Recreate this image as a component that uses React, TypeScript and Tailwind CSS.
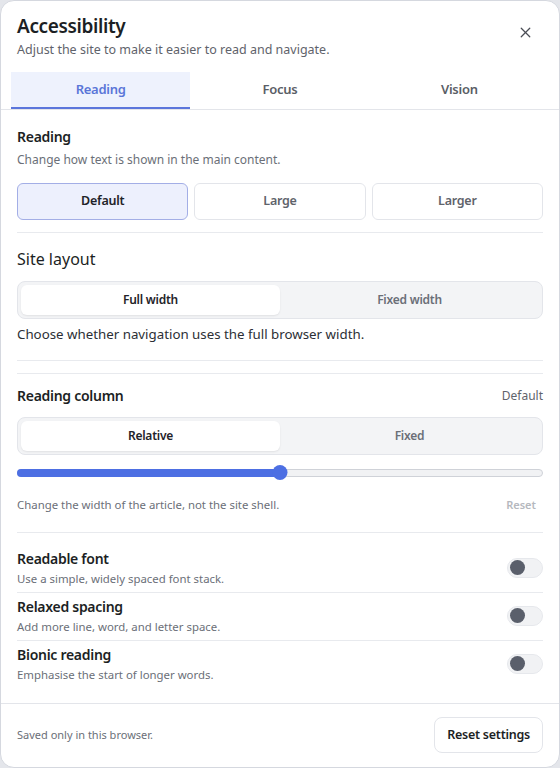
import React, { useState } from 'react'
import { X } from 'lucide-react'

const tabs = ['Reading', 'Focus', 'Vision']
const sizes = ['Default', 'Large', 'Larger']

const toggles = [
  { title: 'Readable font', text: 'Use a simple, widely spaced font stack.' },
  { title: 'Relaxed spacing', text: 'Add more line, word, and letter space.' },
  { title: 'Bionic reading', text: 'Emphasise the start of longer words.' },
]

const Segmented: React.FC<{ options: string[]; value: string; onChange: (v: string) => void }> = ({
  options,
  value,
  onChange,
}) => (
  <div className="flex h-[38px] rounded-lg border border-[#e3e5ea] bg-[#f3f4f6] p-[3px]">
    {options.map(o => (
      <button
        key={o}
        type="button"
        onClick={() => onChange(o)}
        className={`flex-1 rounded-md text-[12px] font-semibold tracking-[-0.02em] ${
          value === o ? 'bg-white text-[#1f2329] shadow-[0_1px_2px_rgba(0,0,0,0.08)]' : 'text-[#6b6f78]'
        }`}
      >
        {o}
      </button>
    ))}
  </div>
)

export default function App() {
  const [tab, setTab] = useState('Reading')
  const [size, setSize] = useState('Default')
  const [layout, setLayout] = useState('Full width')
  const [column, setColumn] = useState('Relative')
  const [width] = useState(50)
  const [on, setOn] = useState<boolean[]>([false, false, false])

  return (
    <div
      className="h-[768px] w-[560px] bg-[#e4e6eb]"
      style={{ fontFamily: '"Noto Sans", "Open Sans", sans-serif' }}
    >
      <div className="flex h-full flex-col overflow-hidden rounded-[14px] border border-[#d5d8df] bg-white">
        {/* header */}
        <div className="flex items-start justify-between px-4 pt-[13px]">
          <div>
            <h1 className="text-[19px] font-semibold leading-[24px] tracking-[-0.02em] text-[#1c1f24]">
              Accessibility
            </h1>
            <p className="mt-[3px] text-[12.5px] leading-[18px] text-[#5f636b]">
              Adjust the site to make it easier to read and navigate.
            </p>
          </div>
          <button type="button" className="mr-[9px] mt-[10px] text-[#4a4d55]" aria-label="Close">
            <X className="h-[17px] w-[17px]" strokeWidth={1.8} />
          </button>
        </div>

        {/* tabs */}
        <div className="mt-[13px] border-b border-[#e3e5ea] px-[10px]">
          <div className="flex">
            {tabs.map(t => (
              <button
                key={t}
                type="button"
                onClick={() => setTab(t)}
                className={`h-[37px] flex-1 border-b-2 text-[13px] font-semibold tracking-[-0.02em] ${
                  tab === t
                    ? 'border-[#5b76dc] bg-[#eef2fd] text-[#5a76d8]'
                    : 'border-transparent text-[#5a5e66]'
                }`}
              >
                {t}
              </button>
            ))}
          </div>
        </div>

        {/* content */}
        <div className="flex-1 px-4">
          <div className="border-b border-[#e8eaee] pb-[12px] pt-[17px]">
            <h2 className="text-[14px] font-semibold leading-[20px] tracking-[-0.02em] text-[#1c1f24]">Reading</h2>
            <p className="mt-[4px] text-[12px] leading-[17px] text-[#6b6f78]">
              Change how text is shown in the main content.
            </p>
            <div className="mt-[15px] grid grid-cols-3 gap-[6px]">
              {sizes.map(s => (
                <button
                  key={s}
                  type="button"
                  onClick={() => setSize(s)}
                  className={`h-[37px] rounded-md border text-[12.5px] font-semibold tracking-[-0.02em] ${
                    size === s
                      ? 'border-[#a3aee6] bg-[#edf0fd] text-[#1f2329]'
                      : 'border-[#e3e5ea] bg-white text-[#5f636b]'
                  }`}
                >
                  {s}
                </button>
              ))}
            </div>
          </div>

          <div className="border-b border-[#e8eaee] pb-[17px] pt-[15px]">
            <h2 className="text-[16px] leading-[22px] text-[#1c1f24]">Site layout</h2>
            <div className="mt-[11px]">
              <Segmented options={['Full width', 'Fixed width']} value={layout} onChange={setLayout} />
            </div>
            <p className="mt-[6px] text-[13.3px] leading-[18px] text-[#2c2f35]">
              Choose whether navigation uses the full browser width.
            </p>
          </div>

          <div className="mt-[12px] border-t border-b border-[#e8eaee] pb-[18px] pt-[12px]">
            <div className="flex items-center justify-between">
              <h2 className="text-[14px] font-semibold leading-[20px] tracking-[-0.02em] text-[#1c1f24]">
                Reading column
              </h2>
              <span className="text-[12px] text-[#5f636b]">Default</span>
            </div>
            <div className="mt-[11px]">
              <Segmented options={['Relative', 'Fixed']} value={column} onChange={setColumn} />
            </div>
            <div className="relative mt-[10px] h-[15px]">
              <div className="absolute left-0 right-0 top-[3.5px] h-[8px] rounded-full border border-[#cfd2d8] bg-[#f1f2f4]" />
              <div
                className="absolute left-0 top-[3.5px] h-[8px] rounded-full bg-[#4d6fe3]"
                style={{ width: `${width}%` }}
              />
              <div
                className="absolute top-0 h-[15px] w-[15px] -translate-x-1/2 rounded-full bg-[#4d6fe3]"
                style={{ left: `${width}%` }}
              />
            </div>
            <div className="mt-[17px] flex items-center justify-between">
              <p className="text-[11.4px] leading-[16px] text-[#6b6f78]">
                Change the width of the article, not the site shell.
              </p>
              <button type="button" className="mr-[7px] text-[11px] font-semibold text-[#b5b8be]">
                Reset
              </button>
            </div>
          </div>

          <div className="pt-[12px]">
            {toggles.map((t, i) => (
              <div
                key={t.title}
                className={`flex items-center justify-between pb-[5px] pt-[4px] ${
                  i < toggles.length - 1 ? 'border-b border-[#e8eaee]' : ''
                }`}
              >
                <div>
                  <div className="text-[14px] font-semibold leading-[20px] tracking-[-0.02em] text-[#1c1f24]">
                    {t.title}
                  </div>
                  <div className="mt-[2px] text-[11.4px] leading-[16px] text-[#6b6f78]">{t.text}</div>
                </div>
                <button
                  type="button"
                  onClick={() => setOn(prev => prev.map((v, j) => (j === i ? !v : v)))}
                  className={`flex h-[20px] w-[36px] items-center rounded-full border border-[#e6e8ec] px-[2px] ${
                    on[i] ? 'justify-end bg-[#4d6fe3]' : 'bg-[#f1f2f4]'
                  }`}
                  aria-label={t.title}
                >
                  <span className={`h-[15px] w-[15px] rounded-full ${on[i] ? 'bg-white' : 'bg-[#5a5f6b]'}`} />
                </button>
              </div>
            ))}
          </div>
        </div>

        {/* footer */}
        <div className="flex items-center justify-between border-t border-[#e3e5ea] px-4 pb-[14px] pt-[13px]">
          <span className="text-[11px] text-[#6b6f78]">Saved only in this browser.</span>
          <button
            type="button"
            className="h-[36px] rounded-lg border border-[#e3e5ea] bg-white px-[12px] text-[12.5px] font-semibold tracking-[-0.02em] text-[#1c1f24]"
          >
            Reset settings
          </button>
        </div>
      </div>
    </div>
  )
}
